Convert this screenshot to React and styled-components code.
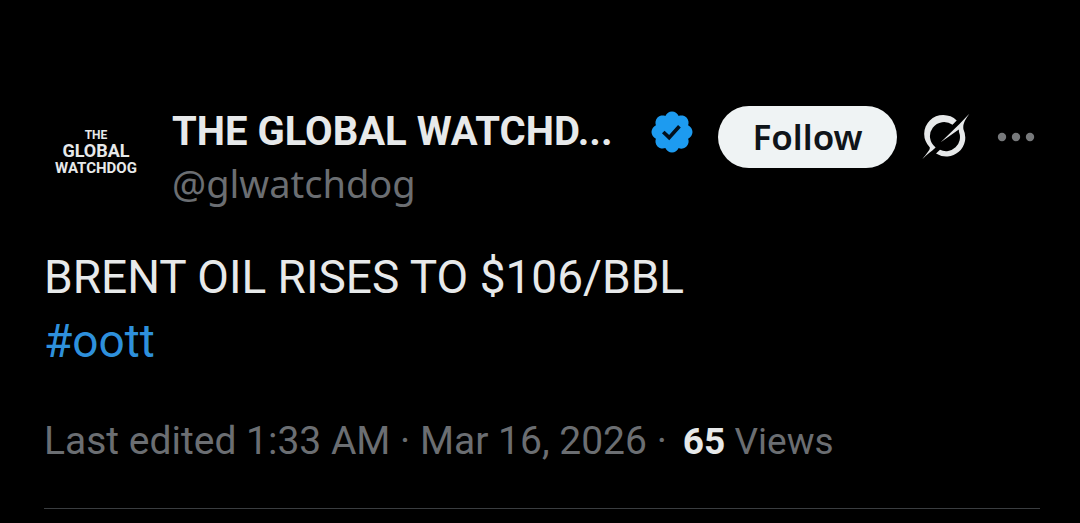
import React from "react";
import styled, { createGlobalStyle } from "styled-components";

const App = () => {
  return (
    <>
      <GlobalStyle />
      <Post>
        <Header>
          <Avatar href="#profile">
            <AvatarSmall>THE</AvatarSmall>
            <AvatarLarge>GLOBAL</AvatarLarge>
            <AvatarMedium>WATCHDOG</AvatarMedium>
          </Avatar>
          <Author>
            <NameRow>
              <Name href="#profile">THE GLOBAL WATCHD...</Name>
              <VerifiedIcon />
            </NameRow>
            <Handle href="#profile">@glwatchdog</Handle>
          </Author>
          <Actions>
            <FollowButton type="button">Follow</FollowButton>
            <IconButton type="button" aria-label="Explain this post">
              <GrokIcon />
            </IconButton>
            <IconButton type="button" aria-label="More">
              <MoreIcon />
            </IconButton>
          </Actions>
        </Header>
        <Body>
          <p>BRENT OIL RISES TO $106/BBL</p>
          <Hashtag href="#oott">#oott</Hashtag>
        </Body>
        <Meta>
          <span>Last edited 1:33 AM · Mar 16, 2026 ·</span>
          <Views>
            <strong>65</strong> Views
          </Views>
        </Meta>
      </Post>
    </>
  );
};

const VerifiedIcon = () => (
  <Badge viewBox="0 0 22 22" role="img" aria-label="Verified account">
    <path
      fill="#1d9bf0"
      d="M20.396 11c-.018-.646-.215-1.275-.57-1.816-.354-.54-.852-.972-1.438-1.246.223-.607.27-1.264.14-1.897-.131-.634-.437-1.218-.882-1.687-.47-.445-1.053-.75-1.687-.882-.633-.13-1.29-.083-1.897.14-.273-.587-.704-1.086-1.245-1.44S11.647 1.62 11 1.604c-.646.017-1.273.213-1.813.568s-.969.854-1.24 1.44c-.608-.223-1.267-.272-1.902-.14-.635.13-1.22.436-1.69.882-.445.47-.749 1.055-.878 1.688-.13.633-.08 1.29.144 1.896-.587.274-1.087.705-1.443 1.245-.356.54-.555 1.17-.574 1.817.02.647.218 1.276.574 1.817.356.54.856.972 1.443 1.245-.224.606-.274 1.263-.144 1.896.13.634.433 1.218.877 1.688.47.443 1.054.747 1.687.878.633.132 1.29.084 1.897-.136.274.586.705 1.084 1.246 1.439.54.354 1.17.551 1.816.569.647-.016 1.276-.213 1.817-.567s.972-.854 1.245-1.44c.604.239 1.266.296 1.903.164.636-.132 1.22-.447 1.68-.907.46-.46.776-1.044.908-1.681s.075-1.299-.165-1.903c.586-.274 1.084-.705 1.439-1.246.354-.54.551-1.17.569-1.816z"
    />
    <path
      d="M7 11l2.7 2.6 4.7-5.2"
      fill="none"
      stroke="#02101c"
      strokeWidth="1.7"
    />
  </Badge>
);

const GrokIcon = () => (
  <svg width="49" height="48" viewBox="0 0 49 48" fill="#e7e9ea">
    <path d="M35.7 7.5A19 19 0 0 0 8.7 34.3C9.5 36.5 6 40 1.3 46.3C6 41 11 38 14.6 34.4A14 14 0 0 1 31.5 11.8Z" />
    <path d="M48.3.7C44 7 41.5 11 42.5 16.5A19 19 0 0 1 15 40.5L19 36.8A14 14 0 0 0 38 19L37.8 16.5L19.7 29.3L38 11.5Z" />
  </svg>
);

const MoreIcon = () => (
  <svg width="42" height="10" viewBox="0 0 42 10" fill="#77797b">
    <circle cx="8" cy="5" r="4.2" />
    <circle cx="22" cy="5" r="4.2" />
    <circle cx="36" cy="5" r="4.2" />
  </svg>
);

const GlobalStyle = createGlobalStyle`
  * {
    box-sizing: border-box;
  }

  body {
    margin: 0;
    background: #000;
    color: #e7e9ea;
    font-family: Roboto, "Liberation Sans", sans-serif;
  }

  p {
    margin: 0;
  }

  a {
    color: inherit;
    text-decoration: none;
  }
`;

const Post = styled.article`
  margin: 0 40px 0 44px;
  padding: 100px 0 38px;
  border-bottom: 1px solid #3a3d40;
`;

const Header = styled.header`
  display: flex;
  align-items: flex-start;
`;

const Avatar = styled.a`
  width: 104px;
  height: 104px;
  margin-right: 24px;
  display: flex;
  flex-direction: column;
  align-items: center;
  justify-content: center;
  flex-shrink: 0;
  border-radius: 50%;
  font-weight: 700;
`;

const AvatarSmall = styled.span`
  font-size: 12px;
  line-height: 14px;
`;

const AvatarLarge = styled.span`
  font-size: 18px;
  line-height: 18px;
`;

const AvatarMedium = styled.span`
  font-size: 15px;
  line-height: 16px;
`;

const Author = styled.div`
  flex: 1;
  min-width: 0;
`;

const NameRow = styled.div`
  display: flex;
  align-items: center;
  justify-content: space-between;
  height: 64px;
  padding-right: 22px;
`;

const Name = styled.a`
  font-size: 40px;
  font-weight: 700;
  line-height: 48px;
  white-space: nowrap;
`;

const Badge = styled.svg`
  width: 48px;
  height: 48px;
  flex-shrink: 0;
`;

const Handle = styled.a`
  display: block;
  color: #6b6e72;
  font-family: "Noto Sans", sans-serif;
  font-size: 38px;
  line-height: 38px;
`;

const Actions = styled.div`
  display: flex;
  align-items: center;
  gap: 24px;
  padding: 6px 4px 0 0;
`;

const FollowButton = styled.button`
  height: 62px;
  width: 179px;
  padding: 0;
  border: 0;
  border-radius: 100px;
  background-color: #eff3f4;
  color: #0f1419;
  font-family: "Noto Sans", sans-serif;
  font-size: 35px;
  font-weight: 600;
  line-height: 60px;
  cursor: pointer;
`;

const IconButton = styled.button`
  display: flex;
  padding: 0;
  border: 0;
  background: none;
  cursor: pointer;
`;

const Body = styled.div`
  margin-top: 41px;
  font-size: 46px;
  line-height: 64px;
`;

const Hashtag = styled.a`
  color: #2e90dc;
`;

const Meta = styled.div`
  display: flex;
  align-items: baseline;
  gap: 16px;
  margin-top: 40px;
  color: #6b6e72;
  font-size: 39px;
  line-height: 56px;
  white-space: nowrap;
`;

const Views = styled.span`
  font-size: 37px;

  strong {
    color: #e7e9ea;
    font-weight: 700;
  }
`;

export default App;
